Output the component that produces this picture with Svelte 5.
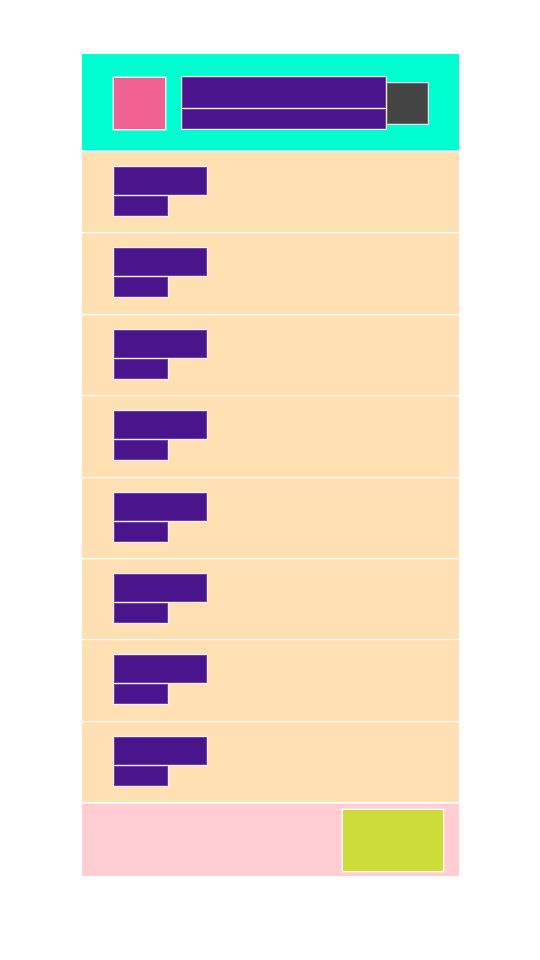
<script>
  const rows = Array.from({ length: 8 }, (_, i) => i);
</script>

<main class="panel">
  <header class="bar">
    <div class="avatar"></div>
    <div class="heading">
      <div class="title"></div>
      <div class="subtitle"></div>
    </div>
    <div class="icon"></div>
  </header>

  <ul class="list">
    {#each rows as row (row)}
      <li class="row">
        <div class="primary"></div>
        <div class="secondary"></div>
      </li>
    {/each}
  </ul>

  <footer class="actions">
    <button class="action" type="button" aria-label="Action"></button>
  </footer>
</main>

<style>
  :global(body) {
    background: #ffffff;
    font-family: "Liberation Sans", sans-serif;
  }

  .panel,
  .panel * {
    box-sizing: border-box;
  }

  .panel {
    padding: 54px 81px 84px 82px;
  }

  .bar {
    display: flex;
    align-items: center;
    padding: 22px 30px 20px 31px;
    border-bottom: 1px solid #a6ffec;
    background: #00ffd0;
  }

  .avatar {
    width: 53px;
    height: 53px;
    margin-right: 15px;
    border: 1px solid #ffe8f0;
    background: #f06292;
    box-shadow: 0 0 0 1px rgba(255, 255, 255, 0.4);
  }

  .heading {
    flex: 1;
  }

  .title,
  .subtitle,
  .primary,
  .secondary {
    border: 1px solid #f4f0f8;
    background: #4a148c;
    box-shadow: inset 0 0 0 1px rgba(255, 255, 255, 0.2);
  }

  .title {
    height: 33px;
  }

  .subtitle,
  .secondary {
    height: 21px;
    border-top: 0;
  }

  .icon {
    width: 42px;
    height: 43px;
    border: 1px solid #e8e8e8;
    border-left: 0;
    background: #444444;
    box-shadow: inset 0 0 0 1px rgba(255, 255, 255, 0.2);
  }

  .list {
    display: flex;
    flex-direction: column;
    height: 651px;
    margin: 0;
    padding: 0;
    list-style: none;
  }

  .row {
    flex: 1;
    padding: 14px 31px;
    border-top: 1px solid #ffffff;
    background: #ffe0b2;
    box-shadow: inset 0 1px rgba(255, 255, 255, 0.2);
  }

  .primary {
    width: 95px;
    height: 30px;
  }

  .secondary {
    width: 56px;
  }

  .actions {
    display: flex;
    justify-content: flex-end;
    margin-top: 1px;
    padding: 5px 15px 4px;
    border-top: 1px solid #ffeef0;
    background: #ffcdd2;
  }

  .action {
    width: 102px;
    height: 63px;
    padding: 0;
    border: 1px solid #ffffff;
    border-radius: 0;
    background: #cddc39;
    box-shadow: 0 0 0 1px rgba(255, 255, 255, 0.3);
  }
</style>
